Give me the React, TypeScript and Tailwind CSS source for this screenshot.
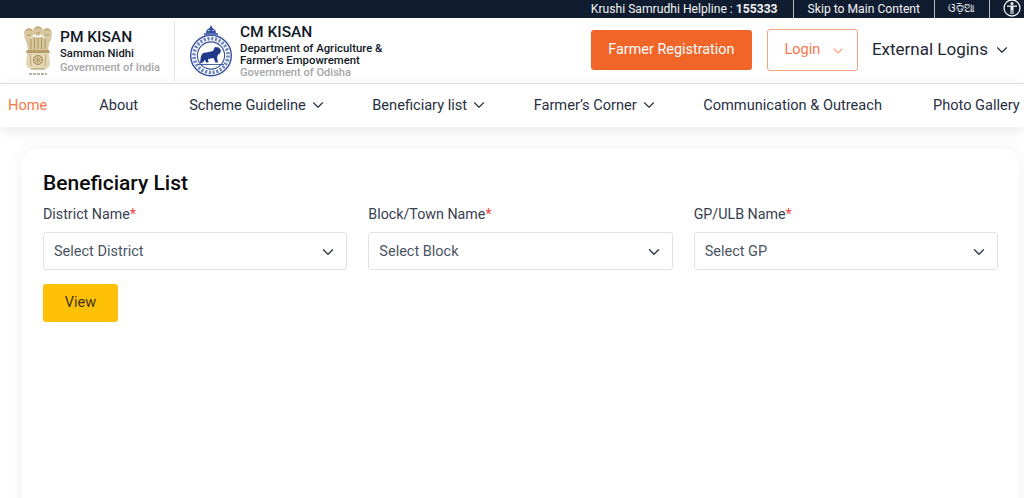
import { ChevronDown } from 'lucide-react'

const navItems = [
  { label: 'Home', active: true },
  { label: 'About' },
  { label: 'Scheme Guideline', menu: true },
  { label: 'Beneficiary list', menu: true },
  { label: 'Farmer’s Corner', menu: true },
  { label: 'Communication & Outreach' },
  { label: 'Photo Gallery' },
]

const fields = [
  { label: 'District Name', placeholder: 'Select District' },
  { label: 'Block/Town Name', placeholder: 'Select Block' },
  { label: 'GP/ULB Name', placeholder: 'Select GP' },
]

function IndiaEmblem() {
  return (
    <svg width="32" height="50" viewBox="0 0 32 50" className="shrink-0">
      {/* lion heads */}
      <g fill="#d8c8a0">
        <circle cx="16" cy="5" r="5" />
        <circle cx="7" cy="7" r="5" />
        <circle cx="25" cy="7" r="5" />
        <path d="M2 9c1 5 2 6 3 9l1 6h20l1-6c1-3 2-4 3-9-3 3-5 3-7 3l-2-1h-10l-2 1c-2 0-4 0-7-3z" />
      </g>
      <g fill="none" stroke="#a98f57" strokeWidth="0.9">
        <path d="M13 3c2-2 4-2 6 0M4 5c2-2 4-2 6 0M22 5c2-2 4-2 6 0" />
        <path d="M14 7h4M5 9h4M23 9h4" />
        <path d="M9 13v10M12.500 12v11M16 12v11M19.500 12v11M23 13v10" />
      </g>
      {/* abacus and wheel */}
      <path d="M5 24h22l1 3H4z" fill="#b79d66" />
      <path d="M5 27h22l1 10c0 4-3 6-6 6H10c-3 0-6-2-6-6z" fill="#e4d8ba" />
      <circle cx="16" cy="34" r="4.500" fill="#d8c8a0" stroke="#a98f57" strokeWidth="1.100" />
      <path d="M16 29.500v9M11.500 34h9M12.800 30.800l6.400 6.400M19.200 30.800l-6.400 6.400" stroke="#a98f57" strokeWidth="0.600" />
      <path d="M8 28l1 12M24 28l-1 12" stroke="#c3ad7a" strokeWidth="1.200" />
      <path d="M9 42.500h14v1H9z" fill="#a98f57" />
      <path d="M7 48h18" stroke="#a09a88" strokeWidth="1.400" strokeDasharray="3 1" />
    </svg>
  )
}

function OdishaEmblem() {
  return (
    <svg width="44" height="52" viewBox="0 0 44 52" className="shrink-0">
      <circle cx="22" cy="30.500" r="20.300" fill="#fff" stroke="#34509f" strokeWidth="1.400" />
      <circle cx="22" cy="30.500" r="17" fill="none" stroke="#6f86c0" strokeWidth="3.600" strokeDasharray="2.200 1.600" />
      <circle cx="22" cy="30.500" r="13.600" fill="#fff" stroke="#34509f" strokeWidth="1.100" />
      {/* crown */}
      <path d="M17 8c0-3 2-4 3.500-5L22 0l1.500 3C25 4 27 5 27 8z" fill="#34509f" />
      <path d="M15 8h14v2.500H15z" fill="#5872b4" />
      <path d="M19 5.500h1.500M23.500 5.500H25" stroke="#fff" strokeWidth="0.800" />
      {/* lion */}
      <path d="M11 38l1-7 2-3 6-1 4-1 2-4 4 .500 2 3-1 3-2 1-1 3 1 5h-2.500l-2-4.500-5.500 1 .500 3.500H17l-1-3-2 3z" fill="#1f3a8a" />
      <path d="M9 39.500h26" stroke="#34509f" strokeWidth="0.900" />
    </svg>
  )
}

export default function App() {
  return (
    <div className="h-[498px] overflow-hidden bg-white font-['Roboto',sans-serif]">
      <div className="flex h-[18px] items-center justify-end overflow-hidden bg-[#101d31] text-[12.150px] leading-[18px] text-[#f1f1f1]">
        <span>
          Krushi Samrudhi Helpline : <b className="font-bold">155333</b>
        </span>
        <span className="mr-[14px] ml-[15px] h-[18px] w-px bg-[#bbbbbb]" />
        <span>Skip to Main Content</span>
        <span className="mr-[13px] ml-[14px] h-[18px] w-px bg-[#bbbbbb]" />
        <span className="text-[10.500px]">ଓଡ଼ିଆ</span>
        <span className="mr-[13px] ml-[14px] h-[18px] w-px bg-[#bbbbbb]" />
        <svg width="18" height="18" viewBox="0 0 18 18" className="mt-[-3px] mr-[3px] shrink-0">
          <circle cx="9" cy="9" r="8" fill="none" stroke="#f1f1f1" strokeWidth="1.300" />
          <circle cx="9" cy="4.600" r="1.500" fill="#f1f1f1" />
          <path d="M4 6.500h10v1.200h-3.500v7.300H9.400v-3.800h-.8V15H7.500V7.700H4z" fill="#f1f1f1" />
        </svg>
      </div>

      <header className="flex h-[66px] items-center border-b border-[#e4e4e4] bg-white">
        <div className="ml-[22px] flex items-center">
          <IndiaEmblem />
          <div className="ml-[6px] w-[114px] text-[#111827]">
            <div className="text-[15.500px] leading-[20px] font-medium">PM KISAN</div>
            <div className="text-[11.250px] leading-[14px] font-medium">Samman Nidhi</div>
            <div className="text-[11px] leading-[14px] font-medium text-[#a6a6a6]">Government of India</div>
          </div>
        </div>
        <div className="h-[60px] w-px bg-[#e4e4e4]" />
        <div className="ml-[14px] flex items-center">
          <OdishaEmblem />
          <div className="ml-[7px] text-[#111827]">
            <div className="text-[15.500px] leading-[20px] font-medium">CM KISAN</div>
            <div className="text-[11.350px] leading-[12px] font-medium">Department of Agriculture &amp;</div>
            <div className="text-[11.350px] leading-[12px] font-medium">Farmer's Empowrement</div>
            <div className="text-[11.100px] leading-[14px] font-medium text-[#a6a6a6]">Government of Odisha</div>
          </div>
        </div>
        <div className="mb-[2px] ml-auto flex items-center">
          <button className="flex h-[40px] w-[161px] items-center justify-center rounded-[3px] bg-[#f26529] text-[14.400px] text-white">
            Farmer Registration
          </button>
          <button className="ml-[15px] flex h-[42px] w-[91px] items-center justify-center gap-[10px] rounded-[3px] border border-[#f9a27d] bg-white pl-[6px] text-[14.500px] text-[#f9764a]">
            Login
            <ChevronDown className="mt-[3px] h-[16px] w-[16px] text-[#f9a27d]" strokeWidth={1.75} />
          </button>
          <div className="mr-[13px] ml-[14px] flex items-center gap-[5px] text-[17px] text-[#1f2937]">
            External Logins
            <ChevronDown className="h-[18px] w-[18px]" strokeWidth={1.5} />
          </div>
        </div>
      </header>

      <nav className="flex h-[43px] items-center gap-[51px] overflow-hidden bg-white pl-[8px] text-[14.600px] whitespace-nowrap text-[#273142] shadow-[0_3px_14px_rgba(0,0,0,0.1)]">
        {navItems.map((item) => (
          <span
            key={item.label}
            className={`flex shrink-0 items-center gap-[3px] ${item.active ? 'mr-[1px] text-[#f9764a]' : ''} ${item.menu ? 'mr-[-5.500px]' : ''}`}
          >
            {item.label}
            {item.menu && <ChevronDown className="h-[18px] w-[18px]" strokeWidth={1.5} />}
          </span>
        ))}
      </nav>

      <main className="mt-[22px] mr-[5px] ml-[22px] h-[500px] rounded-t-[16px] bg-white px-[21px] pt-[21px] shadow-[0_0_20px_rgba(0,0,0,0.06)]">
        <h1 className="text-[21px] leading-[26px] font-medium text-[#0b0b0b]">Beneficiary List</h1>
        <div className="mt-[8px] grid grid-cols-3 gap-x-[21px]">
          {fields.map((field) => (
            <div key={field.label}>
              <div className="text-[14.250px] leading-[20px] text-[#374151]">
                {field.label}
                <span className="text-[#ef4444]">*</span>
              </div>
              <div className="mt-[8px] flex h-[38px] items-center justify-between rounded-[3px] border border-[#e2e3e8] bg-white pt-[1px] pr-[9px] pl-[10px] text-[14.500px] text-[#4b5563]">
                {field.placeholder}
                <ChevronDown className="h-[18px] w-[18px] text-[#374151]" strokeWidth={2} />
              </div>
            </div>
          ))}
        </div>
        <button className="mt-[14px] h-[38px] w-[75px] rounded-[3px] bg-[#ffc107] text-[14.500px] text-[#3f3312]">View</button>
      </main>
    </div>
  )
}
